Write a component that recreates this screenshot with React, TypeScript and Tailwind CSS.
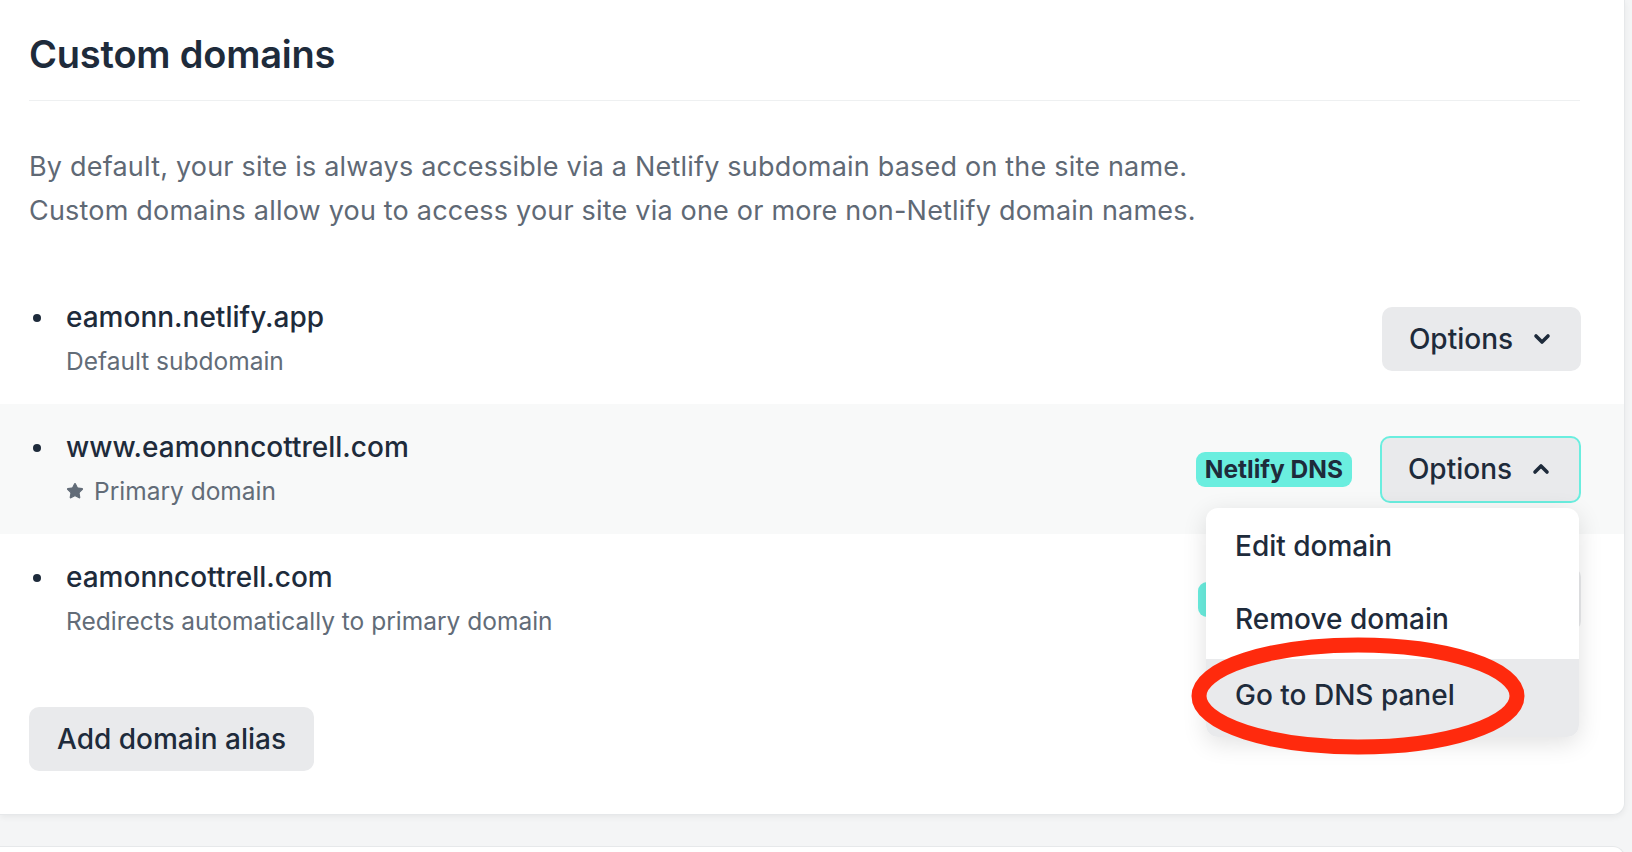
import { ChevronDown, ChevronUp, Star } from 'lucide-react';

type Domain = {
  name: string;
  note: string;
  primary?: boolean;
  dns?: boolean;
  open?: boolean;
  highlight?: boolean;
};

const domains: Domain[] = [
  { name: 'eamonn.netlify.app', note: 'Default subdomain' },
  { name: 'www.eamonncottrell.com', note: 'Primary domain', primary: true, dns: true, open: true, highlight: true },
  { name: 'eamonncottrell.com', note: 'Redirects automatically to primary domain', dns: true },
];

const btn =
  'flex items-center justify-center gap-[17px] rounded-[10px] bg-[#e9eaec] text-[#1e2b3b] font-medium text-[28px]';

const item = 'flex items-center pl-[29px] text-[28px] font-medium text-[#1e2b3b]';

function OptionsMenu() {
  return (
    <div className="absolute right-[2px] top-[calc(100%+5px)] z-20 w-[373px] rounded-[12px] bg-white shadow-[0_6px_24px_rgba(0,0,0,0.12)] overflow-hidden">
      <div className={`${item} h-[76px]`}>Edit domain</div>
      <div className={`${item} h-[75px] pb-[4px]`}>Remove domain</div>
      <div className={`${item} h-[78px] pb-[6px] bg-[#e9eaec]`}>Go to DNS panel</div>
    </div>
  );
}

function Row({ d }: { d: Domain }) {
  return (
    <li className={`flex items-center justify-between pl-[33px] pr-[43px] h-[130px] ${d.highlight ? 'bg-[#f8f9f9]' : ''}`}>
      <div className="flex items-start gap-[25px]">
        <span className="mt-[19px] w-[8px] h-[8px] rounded-full bg-[#1e2b3b]" />
        <div>
          <div className="text-[28px] leading-[44px] font-medium text-[#1e2b3b]">{d.name}</div>
          <div className="flex items-center gap-[10px] text-[24.5px] leading-[44px] text-[#626c78]">
            {d.primary && <Star size={18} className="fill-[#626c78] text-[#626c78]" strokeWidth={1.5} />}
            {d.note}
          </div>
        </div>
      </div>
      <div className="flex items-center gap-[28px]">
        {d.dns && (
          <span className="h-[35px] px-[9px] flex items-center rounded-[9px] bg-[#6aeedf] text-[24.5px] font-bold text-[#1e2b3b]">
            Netlify DNS
          </span>
        )}
        <div className="relative">
          {d.open ? (
            <button className={`${btn} w-[201px] h-[67px] border-2 border-[#6aeedf]`}>
              Options
              <ChevronUp size={24} strokeWidth={3.6} />
            </button>
          ) : (
            <button className={`${btn} w-[199px] h-[64px]`}>
              Options
              <ChevronDown size={24} strokeWidth={3.6} />
            </button>
          )}
          {d.open && <OptionsMenu />}
        </div>
      </div>
    </li>
  );
}

export default function App() {
  return (
    <div className="min-h-screen bg-[#f4f5f6] overflow-hidden" style={{ fontFamily: 'Inter, "Noto Sans", sans-serif' }}>
      <div className="relative w-[1625px] bg-white rounded-br-[12px] border-r border-b border-[#e6e8ea] shadow-[0_2px_6px_rgba(0,0,0,0.06)]">
        <div className="pl-[29px] pr-[44px] pt-[30px]">
          <h2 className="text-[38px] leading-[48px] font-semibold text-[#1e2b3b] tracking-[-0.2px]">Custom domains</h2>
          <div className="mt-[22px] border-b border-[#eef0f1]" />
          <p className="mt-[44px] text-[27px] leading-[44px] tracking-[0.2px] text-[#5f6975]">
            By default, your site is always accessible via a Netlify subdomain based on the site name.
            <br />
            Custom domains allow you to access your site via one or more non-Netlify domain names.
          </p>
        </div>

        <ul className="mt-[41px]">
          {domains.map((d) => (
            <Row key={d.name} d={d} />
          ))}
        </ul>

        <div className="pl-[29px] pt-[43px] pb-[43px]">
          <button className="h-[64px] px-[28px] rounded-[10px] bg-[#e9eaec] text-[28px] font-medium text-[#1e2b3b]">
            Add domain alias
          </button>
        </div>

        {/* red highlight round the DNS panel item */}
        <svg className="absolute left-[1191px] top-[637px] z-30 pointer-events-none" width="334" height="118" viewBox="0 0 334 118">
          <ellipse cx="167" cy="59" rx="159" ry="51" fill="none" stroke="#ff2a0d" strokeWidth="15" />
        </svg>
      </div>

      <div className="mt-[31px] h-[40px] w-[1625px] bg-white rounded-tr-[12px] border-t border-r border-[#e6e8ea]" />
    </div>
  );
}
